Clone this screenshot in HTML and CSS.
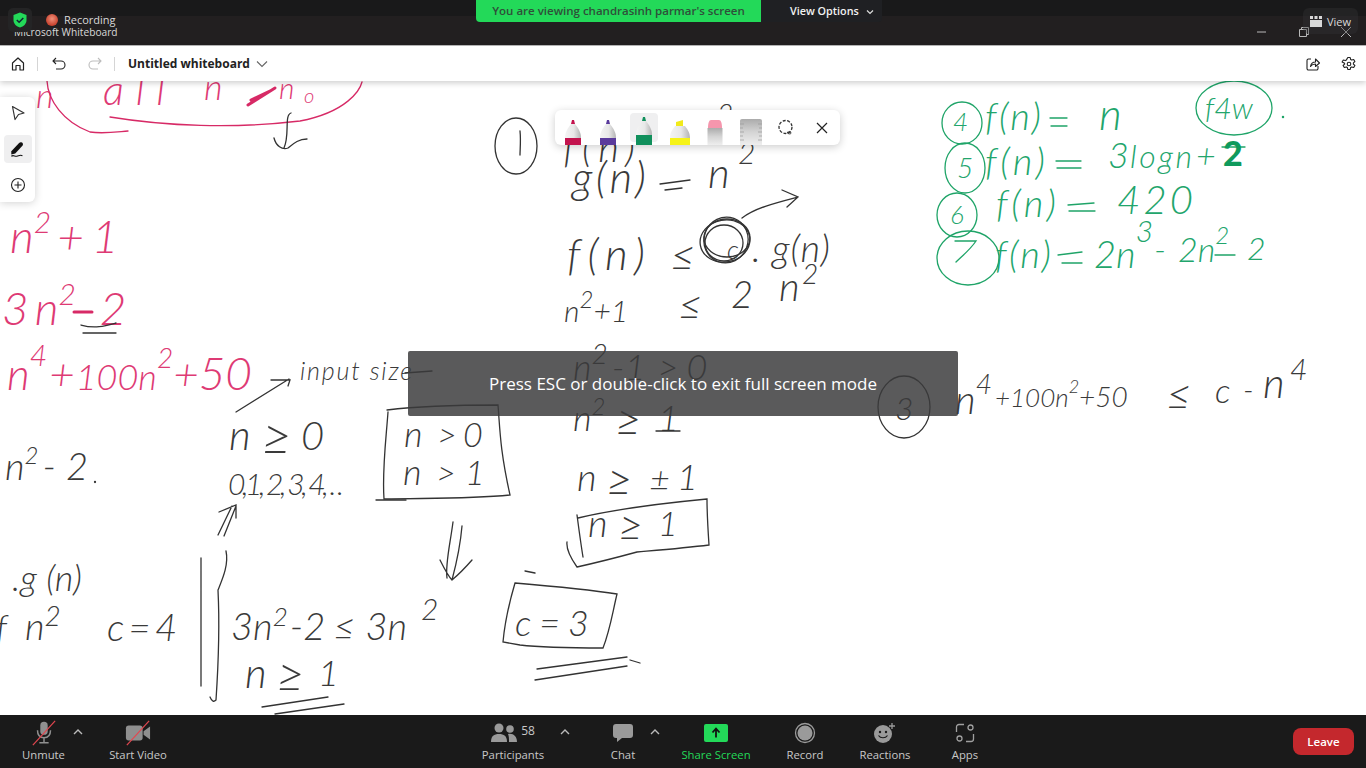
FILE: index.html
```html
<!DOCTYPE html>
<html lang="en">
<head>
    <meta charset="UTF-8">
    <meta name="viewport" content="width=device-width, initial-scale=1.0">
    <title>Microsoft Whiteboard</title>
    <link rel="stylesheet" href="styles.css">
</head>
<body>
<div class="screen">
    <div class="meeting-strip"></div>

    <div class="title-bar">
        <span class="app-name">Microsoft Whiteboard</span>
        <div class="window-controls">
            <svg width="12" height="12" viewBox="0 0 12 12"><path d="M1 6h9" stroke="#b9b9b9" fill="none"/></svg>
            <svg width="12" height="12" viewBox="0 0 12 12"><path d="M1.500 3.500h7v7h-7zM3.500 3.500v-2h7v7h-2" stroke="#b9b9b9" fill="none"/></svg>
            <svg width="12" height="12" viewBox="0 0 12 12"><path d="M1 1l10 10M11 1L1 11" stroke="#b9b9b9" fill="none"/></svg>
        </div>
    </div>

    <div class="wb-toolbar">
        <svg class="wb-icon" viewBox="0 0 16 16"><path d="M2.500 7L8 2l5.500 5v7h-3.500v-4.500h-4V14H2.500z" fill="none" stroke="#222" stroke-width="1.200" stroke-linejoin="round"/></svg>
        <span class="wb-divider"></span>
        <svg class="wb-icon undo" viewBox="0 0 16 16"><path d="M5 2L2 5l3 3M2.500 5H10a3.500 3.500 0 0 1 0 8H5" fill="none" stroke="#222" stroke-width="1.100"/></svg>
        <svg class="wb-icon redo" viewBox="0 0 16 16"><path d="M11 2l3 3-3 3M13.500 5H6a3.500 3.500 0 0 0 0 8h5" fill="none" stroke="#bdbdbd" stroke-width="1.100"/></svg>
        <span class="wb-divider"></span>
        <span class="wb-title">Untitled whiteboard</span>
        <svg class="wb-chevron" width="12" height="12" viewBox="0 0 12 12"><path d="M1 3.500l5 5 5-5" fill="none" stroke="#666" stroke-width="1.100"/></svg>
        <svg class="wb-icon share" viewBox="0 0 16 16"><path d="M6 3H3.500A1.500 1.500 0 0 0 2 4.500v8A1.500 1.500 0 0 0 3.500 14h8a1.500 1.500 0 0 0 1.500-1.500V10M5.500 10.500C6 7.500 8 6 10.500 6V3l4 4-4 3.500V8C8.500 8 6.500 9 5.500 10.500z" fill="none" stroke="#222" stroke-width="1.100" stroke-linejoin="round"/></svg>
        <svg class="wb-icon gear" viewBox="0 0 16 16"><path d="M6.800 1.500h2.400l.4 1.900 1.200.7 1.900-.6 1.200 2-1.500 1.300v1.400l1.500 1.300-1.200 2-1.900-.6-1.200.7-.4 1.900H6.800l-.4-1.900-1.200-.7-1.900.6-1.200-2 1.500-1.300V7.300L1.100 6l1.200-2 1.900.6 1.200-.7z" fill="none" stroke="#222" stroke-width="1.100" stroke-linejoin="round"/><circle cx="8" cy="8" r="1.800" fill="none" stroke="#222" stroke-width="1.100"/></svg>
    </div>

    <div class="board">
        <svg class="ink" viewBox="0 81 1366 634" width="1366" height="634">
            <!-- pink -->
            <g class="pink">
                <text x="36" y="108" font-size="34">n</text>
                <text x="103" y="105" font-size="42" textLength="62">all</text>
                <text x="204" y="100" font-size="36">n</text>
                <text x="279" y="99" font-size="30">n</text>
                <text x="304" y="103" font-size="20">o</text>
                <text x="10" y="253" font-size="46">n<tspan dy="-20" font-size="30">2</tspan><tspan dy="20" dx="6">+</tspan><tspan dx="8">1</tspan></text>
                <text x="2" y="325" font-size="46">3<tspan dx="6">n</tspan><tspan dy="-20" font-size="30">2</tspan><tspan dy="20" dx="24">2</tspan></text>
                <text x="7" y="390" font-size="44">n<tspan dy="-24" font-size="30">4</tspan><tspan dy="24" dx="2">+</tspan><tspan dx="1" font-size="36">100n</tspan><tspan dy="-22" font-size="28">2</tspan><tspan dy="22">+</tspan><tspan font-size="46">50</tspan></text>
                <path d="M47 81C48 100 63 122 90 132C103 134 116 132 128 131"/>
                <path d="M110 117C165 126 233 129 300 121C347 112 360 90 362 82"/>
                <path class="heavy" d="M248 105L275 88M251 100L272 90"/>
                <path class="heavy" d="M74 312H92"/>
            </g>
            <!-- black -->
            <g class="dark">
                <path d="M291 113C284 115 290 135 284 148M274 138C276 146 282 150 288 148C293 144 298 139 307 139"/>
                <path d="M81 325C95 329 105 326 116 323M83 333H116"/>
                <text x="5" y="480" font-size="38">n<tspan dy="-16" font-size="24">2</tspan><tspan dy="16" dx="4">-</tspan><tspan dx="10">2</tspan></text>
                <circle cx="95" cy="482" r="0.500"/>
                <text x="300" y="380" font-size="25" textLength="112">input size</text>
                <path d="M236 412L289 379M271 380H290L288 386"/>
                <path d="M405 373L432 371"/>
                <text x="229" y="450" font-size="42">n</text>
                <text x="261" y="455" font-size="54">≥</text>
                <text x="301" y="450" font-size="40">0</text>
                <text x="228" y="495" font-size="30" textLength="116">0,1, 2, 3, 4, . .</text>
                <path d="M376 500H406"/>
                <path d="M387 410C420 406 460 405 498 405C500 430 500 450 510 495C470 499 430 498 384 499C382 470 386 440 388 412"/>
                <text x="404" y="447" font-size="36">n</text>
                <text x="437" y="447" font-size="34">&gt;</text>
                <text x="463" y="447" font-size="34">0</text>
                <text x="403" y="485" font-size="36">n</text>
                <text x="436" y="485" font-size="34">&gt;</text>
                <text x="465" y="485" font-size="34">1</text>
                <path d="M218 535L232 506M224 536L236 506M219 512L236 505L236 518"/>
                <text x="12" y="591" font-size="36" textLength="70">.g (n)</text>
                <text x="-4" y="640" font-size="36">f</text>
                <text x="25" y="640" font-size="38">n<tspan dy="-14" font-size="28">2</tspan></text>
                <text x="107" y="641" font-size="38" textLength="70">c=4</text>
                <path d="M201 558V686M226 551C229 565 222 580 218 590C220 630 218 670 216 700C214 702 212 702 210 697"/>
                <text x="231" y="640" font-size="38">3n<tspan dy="-14" font-size="26">2</tspan><tspan dy="14" dx="2">-2</tspan><tspan dx="8">≤</tspan><tspan dx="10">3n</tspan><tspan dy="-20" font-size="30" dx="14">2</tspan></text>
                <text x="245" y="688" font-size="42">n</text>
                <text x="276" y="692" font-size="50">≥</text>
                <text x="318" y="686" font-size="36">1</text>
                <path d="M262 707L328 697M275 714L344 704"/>
                <path d="M453 522C450 545 445 565 447 578M462 526C460 550 456 565 452 580M440 560C445 570 450 578 452 580C458 575 465 568 472 560"/>

                <ellipse cx="516" cy="146" rx="21" ry="28"/>
                <path d="M520 131C521 140 520 150 520 155"/>
                <text x="563" y="162" font-size="40" textLength="72">f(n)</text>
                <text x="717" y="124" font-size="28">2</text>
                <text x="572" y="193" font-size="44" textLength="74">g(n)</text>
                <path d="M660 184L690 180M665 190L682 188"/>
                <text x="708" y="188" font-size="42">n</text>
                <text x="738" y="164" font-size="30">2</text>

                <text x="567" y="270" font-size="44" textLength="78">f(n)</text>
                <text x="670" y="271" font-size="44">≤</text>
                <ellipse cx="725" cy="241" rx="25" ry="21" transform="rotate(-10 725 241)"/>
                <ellipse cx="726" cy="240" rx="22" ry="23" transform="rotate(20 726 240)"/>
                <ellipse cx="724" cy="243" rx="19" ry="18"/>
                <ellipse cx="727" cy="238" rx="23" ry="19"/>
                <text x="727" y="259" font-size="26">c</text>
                <text x="752" y="262" font-size="38" textLength="78">. g(n)</text>
                <path d="M742 218C755 208 775 203 798 197M782 190L798 197L787 207"/>
                <text x="564" y="322" font-size="30">n<tspan dy="-14" font-size="24">2</tspan><tspan dy="14">+1</tspan></text>
                <text x="678" y="320" font-size="42">≤</text>
                <text x="731" y="308" font-size="38">2</text>
                <text x="779" y="301" font-size="40">n</text>
                <text x="802" y="284" font-size="28">2</text>

                <text x="573" y="380" font-size="36">n<tspan dy="-16" font-size="28">2</tspan><tspan dy="16" dx="4">-1</tspan><tspan dx="12">&gt;</tspan><tspan dx="8">0</tspan></text>
                <text x="573" y="431" font-size="36">n<tspan dy="-16" font-size="24">2</tspan></text>
                <text x="615" y="436" font-size="46">≥</text>
                <text x="658" y="431" font-size="36">1</text>
                <path d="M656 431H680"/>
                <text x="577" y="491" font-size="38">n</text>
                <text x="606" y="496" font-size="46">≥</text>
                <text x="650" y="491" font-size="34">±</text>
                <text x="677" y="490" font-size="36">1</text>

                <path d="M578 518C620 508 665 503 707 499C707 515 708 530 709 545C685 548 660 550 637 552C615 558 595 563 577 567C572 560 566 550 567 542M577 515C579 530 581 545 583 557"/>
                <text x="588" y="537" font-size="38">n</text>
                <text x="618" y="541" font-size="44">≥</text>
                <text x="658" y="536" font-size="34">1</text>
                <path d="M525 571L535 573"/>
                <path d="M515 583C550 586 585 589 617 594C612 615 610 630 603 648C575 648 545 648 520 645L503 642C505 620 510 600 515 583"/>
                <text x="515" y="636" font-size="36" textLength="74">c=3</text>
                <path d="M537 669L627 657M535 680L627 666M630 660L640 663"/>

                <ellipse cx="904" cy="407" rx="26" ry="31"/>
                <text x="895" y="420" font-size="32">3</text>
                <text x="955" y="414" font-size="40">n<tspan dy="-20" font-size="28">4</tspan><tspan dy="13" dx="3" font-size="26">+100n</tspan><tspan dy="-14" font-size="18">2</tspan><tspan dy="14" font-size="28">+50</tspan></text>
                <text x="1166" y="410" font-size="44">≤</text>
                <text x="1215" y="403" font-size="34">c</text>
                <text x="1243" y="400" font-size="30">-</text>
                <text x="1263" y="398" font-size="42">n</text>
                <text x="1290" y="380" font-size="30">4</text>
            </g>
            <!-- green -->
            <g class="green">
                <ellipse cx="962" cy="123" rx="20" ry="21"/>
                <text x="953" y="131" font-size="26">4</text>
                <text x="985" y="130" font-size="38" textLength="56">f(n)</text>
                <path d="M1050 118H1067M1051 126H1067"/>
                <text x="1099" y="130" font-size="44">n</text>
                <ellipse cx="1234" cy="108" rx="38" ry="27"/>
                <text x="1205" y="119" font-size="30">f4w</text>
                <circle cx="1283" cy="117" r="0.600"/>

                <ellipse cx="965" cy="168" rx="20" ry="25"/>
                <text x="957" y="178" font-size="28">5</text>
                <text x="985" y="175" font-size="38" textLength="60">f(n)</text>
                <path d="M1056 161H1081M1057 168H1081"/>
                <text x="1108" y="168" font-size="36">3</text>
                <text x="1130" y="168" font-size="32" textLength="62">logn</text>
                <text x="1196" y="168" font-size="34">+</text>
                <path d="M1222 147H1245"/>
                <text class="bold-ink" x="1223" y="166" font-size="34">2</text>

                <ellipse cx="957" cy="215" rx="20" ry="22"/>
                <text x="950" y="224" font-size="26">6</text>
                <text x="996" y="217" font-size="38" textLength="60">f(n)</text>
                <path d="M1068 205L1094 203M1069 211H1095"/>
                <text x="1117" y="214" font-size="40" textLength="76">420</text>

                <ellipse cx="968" cy="258" rx="31" ry="27"/>
                <path d="M955 241H976C970 250 962 256 956 262"/>
                <text x="995" y="268" font-size="38" textLength="56">f(n)</text>
                <path d="M1058 255L1082 252M1062 263H1082"/>
                <text x="1094" y="268" font-size="38">2n<tspan dy="-26" font-size="30">3</tspan></text>
                <text x="1154" y="262" font-size="34">-</text>
                <text x="1178" y="262" font-size="34">2n<tspan dy="-18" font-size="24">2</tspan></text>
                <path d="M1215 255H1235"/>
                <text x="1247" y="260" font-size="32">2</text>
            </g>
        </svg>

        <div class="tool-panel">
            <button class="panel-btn">
                <svg width="16" height="16" viewBox="0 0 16 16"><path d="M2.500 1.500L14 8l-5.500 1.500L5 14.500z" fill="none" stroke="#333" stroke-width="1.200" stroke-linejoin="round"/></svg>
            </button>
            <button class="panel-btn active">
                <svg width="20" height="20" viewBox="0 0 18 18"><path d="M3 11L10 3.500c2-1.500 4.500 .5 3 2.500L6.500 13l-3.500 1z" fill="#111"/><path d="M3 15.500c2-1.500 3 .5 5 0s3-1.500 5-.5" fill="none" stroke="#111"/></svg>
            </button>
            <button class="panel-btn">
                <svg width="16" height="16" viewBox="0 0 16 16"><circle cx="8" cy="8" r="6.500" fill="none" stroke="#222" stroke-width="1.100"/><path d="M8 4.500v7M4.500 8h7" stroke="#222" stroke-width="1.100"/></svg>
            </button>
        </div>

        <div class="pen-tray">
            <div class="pen-slot">
                <svg width="20" height="34" viewBox="0 0 20 34"><path d="M8 13l1-4h2l1 4z" fill="#c3134e"/><path d="M8 13h4c3 4 6 8 6 14H2c0-6 3-10 6-14z" fill="url(#cone)"/><path d="M2 27h16v7H2z" fill="#c3134e"/></svg>
            </div>
            <div class="pen-slot">
                <svg width="20" height="34" viewBox="0 0 20 34"><path d="M8 13l1-4h2l1 4z" fill="#5a3b9c"/><path d="M8 13h4c3 4 6 8 6 14H2c0-6 3-10 6-14z" fill="url(#cone)"/><path d="M2 27h16v7H2z" fill="#5a3b9c"/></svg>
            </div>
            <div class="pen-slot active">
                <svg width="20" height="34" viewBox="0 0 20 34"><path d="M8 10l1-4h2l1 4z" fill="#11905c"/><path d="M8 10h4c3 4 6 8 6 14H2c0-6 3-10 6-14z" fill="url(#cone)"/><path d="M2 24h16v10H2z" fill="#11905c"/></svg>
            </div>
            <div class="pen-slot">
                <svg width="24" height="34" viewBox="0 0 24 34"><path d="M8 15v-4l7-2v6z" fill="#f1ea1a"/><path d="M7 15h10c2 3 5 6 5 12H2c0-6 3-9 5-12z" fill="url(#cone)"/><path d="M2 27h20v7H2z" fill="#f6f318"/></svg>
            </div>
            <div class="pen-slot">
                <svg width="18" height="34" viewBox="0 0 18 34"><path d="M2 17C2 12 3 9 5 9h8c2 0 3 3 3 8z" fill="#f596ad"/><path d="M1.500 17h15v17h-15z" fill="url(#rubber)"/></svg>
            </div>
            <div class="pen-slot">
                <svg width="24" height="34" viewBox="0 0 24 34"><path d="M1 10c0-2 2-2 3-2h16c1 0 3 0 3 2v24H1z" fill="url(#rubber)"/><path d="M1 13h4M1 17h3M1 21h4M1 25h3M1 29h4M23 13h-4M23 17h-3M23 21h-4M23 25h-3M23 29h-4" stroke="#9a9a9a" stroke-width=".7"/></svg>
            </div>
            <div class="pen-slot">
                <svg width="18" height="18" viewBox="0 0 18 18"><circle cx="8.500" cy="8" r="6.500" fill="none" stroke="#333" stroke-width="1.300" stroke-dasharray="3 1.500"/><path d="M10 13.500c2-1 4-1 4 .5s-3 1-4-.5z" fill="none" stroke="#333"/></svg>
            </div>
            <div class="pen-slot">
                <svg width="14" height="14" viewBox="0 0 14 14"><path d="M2 2l10 10M12 2L2 12" stroke="#222" stroke-width="1.200"/></svg>
            </div>
            <svg class="pen-defs" width="0" height="0">
                <defs>
                    <linearGradient id="cone" x1="0" x2="1" y1="0" y2="0"><stop offset="0" stop-color="#f4f4f4"/><stop offset=".55" stop-color="#e8e8e8"/><stop offset="1" stop-color="#b4b4b4"/></linearGradient>
                    <linearGradient id="rubber" x1="0" x2="0" y1="0" y2="1"><stop offset="0" stop-color="#ababab"/><stop offset=".5" stop-color="#d4d4d4"/><stop offset="1" stop-color="#eee"/></linearGradient>
                </defs>
            </svg>
        </div>

        <div class="fullscreen-msg">Press ESC or double-click to exit full screen mode</div>
    </div>

    <div class="zoom-toolbar">
        <div class="tool tool-unmute">
            <svg class="tool-icon" width="30" height="28" viewBox="0 0 30 28"><rect x="11" y="2" width="8" height="14" rx="4" fill="#8f8f8f"/><path d="M8 11c0 6 3 8 7 8s7-2 7-8M15 19v5M10 24.500h10" fill="none" stroke="#8f8f8f" stroke-width="1.600"/><path d="M3 27L27 1" stroke="#e2464f" stroke-width="1.300"/></svg>
            <span class="tool-label">Unmute</span>
        </div>
        <svg class="caret" width="12" height="8" viewBox="0 0 12 8"><path d="M2 6l4-4 4 4" fill="none" stroke="#bbb" stroke-width="1.400"/></svg>
        <div class="tool tool-video">
            <svg class="tool-icon" width="30" height="28" viewBox="0 0 30 28"><rect x="2" y="6" width="18" height="16" rx="3" fill="#8f8f8f"/><path d="M21 12l7-5v14l-7-5z" fill="#8f8f8f"/><path d="M3 27L27 1" stroke="#e2464f" stroke-width="1.300"/></svg>
            <span class="tool-label">Start Video</span>
        </div>

        <div class="tool tool-participants">
            <div class="tool-icon">
                <svg width="26" height="20" viewBox="0 0 26 20"><circle cx="8" cy="5" r="4.500" fill="#9a9a9a"/><circle cx="19" cy="6" r="3.800" fill="#9a9a9a"/><path d="M0 19c0-6 3-8 8-8s8 2 8 8z" fill="#9a9a9a"/><path d="M17 11c5-1 9 2 9 8h-8c0-3 0-6-1-8z" fill="#9a9a9a"/></svg>
                <span class="count">58</span>
            </div>
            <span class="tool-label">Participants</span>
        </div>
        <svg class="caret caret-people" width="12" height="8" viewBox="0 0 12 8"><path d="M2 6l4-4 4 4" fill="none" stroke="#bbb" stroke-width="1.400"/></svg>
        <div class="tool tool-chat">
            <svg class="tool-icon" width="22" height="20" viewBox="0 0 22 20"><path d="M4 1h14a3 3 0 0 1 3 3v8a3 3 0 0 1-3 3H10l-5 4v-4H4a3 3 0 0 1-3-3V4a3 3 0 0 1 3-3z" fill="#9a9a9a"/></svg>
            <span class="tool-label">Chat</span>
        </div>
        <svg class="caret caret-chat" width="12" height="8" viewBox="0 0 12 8"><path d="M2 6l4-4 4 4" fill="none" stroke="#bbb" stroke-width="1.400"/></svg>
        <div class="tool tool-share">
            <svg class="tool-icon" width="24" height="18" viewBox="0 0 24 18"><rect width="24" height="18" rx="2" fill="#23d959"/><path d="M12 13.500V5M8.500 8.500L12 4.500l3.500 4" fill="none" stroke="#111" stroke-width="1.800"/></svg>
            <span class="tool-label share-label">Share Screen</span>
        </div>
        <div class="tool tool-record">
            <svg class="tool-icon" width="22" height="22" viewBox="0 0 22 22"><circle cx="11" cy="11" r="9.500" fill="none" stroke="#9a9a9a" stroke-width="1.300"/><circle cx="11" cy="11" r="7.500" fill="#9a9a9a"/></svg>
            <span class="tool-label">Record</span>
        </div>
        <div class="tool tool-reactions">
            <svg class="tool-icon" width="24" height="22" viewBox="0 0 24 22"><circle cx="10" cy="12" r="9" fill="#9a9a9a"/><circle cx="7" cy="10" r="1.200" fill="#1a1a1a"/><circle cx="13" cy="10" r="1.200" fill="#1a1a1a"/><path d="M5.500 13.500c2 3 7 3 9 0" fill="none" stroke="#1a1a1a" stroke-width="1.200"/><path d="M19 1v6M16 4h6" stroke="#9a9a9a" stroke-width="1.300"/></svg>
            <span class="tool-label">Reactions</span>
        </div>
        <div class="tool tool-apps">
            <svg class="tool-icon" width="20" height="20" viewBox="0 0 20 20"><path d="M1.500 9V4a2.500 2.500 0 0 1 2.500-2.500h5M18.500 11v5a2.500 2.500 0 0 1-2.500 2.500h-5" fill="none" stroke="#a0a0a0" stroke-width="1.300"/><circle cx="15.500" cy="4.500" r="2.500" fill="none" stroke="#a0a0a0" stroke-width="1.300"/><circle cx="4.500" cy="15.500" r="2.500" fill="none" stroke="#a0a0a0" stroke-width="1.300"/></svg>
            <span class="tool-label">Apps</span>
        </div>
        <button class="leave-btn">Leave</button>
    </div>

    <!-- meeting overlays -->
    <div class="shield-box">
        <svg width="14" height="16" viewBox="0 0 14 16"><path d="M7 .5L13.500 3v5c0 4-3 6.500-6.500 7.500C3.500 14.500.5 12 .5 8V3z" fill="#23d959"/><path d="M3.800 8l2.300 2.300 4.200-4.300" fill="none" stroke="#123" stroke-width="1.500"/></svg>
    </div>
    <div class="recording">
        <span class="rec-dot"></span>
        <span>Recording</span>
    </div>
    <div class="viewing-banner">
        <span class="viewing-text">You are viewing chandrasinh parmar's screen</span>
        <span class="view-options">View Options
            <svg width="8" height="6" viewBox="0 0 8 6"><path d="M1 1.500l3 3 3-3" fill="none" stroke="#ddd" stroke-width="1.200"/></svg>
        </span>
    </div>
    <div class="view-btn">
        <svg width="12" height="11" viewBox="0 0 12 11"><path d="M0 0h3v3H0zM4.500 0h3v3h-3zM9 0h3v3H9zM0 4h12v7H0z" fill="#d8d8d8"/></svg>
        <span>View</span>
    </div>
</div>
</body>
</html>
```

FILE: styles.css
```css
* {
  box-sizing: border-box;
}

body {
  margin: 0;
  font-family: "Open Sans", "Noto Sans", sans-serif;
  background-color: #fff;
}

.screen {
  position: relative;
  display: flex;
  flex-direction: column;
  width: 1366px;
  height: 768px;
  overflow: hidden;
}

.meeting-strip {
  height: 16px;
  background-color: #19191a;
}

.title-bar {
  display: flex;
  align-items: center;
  justify-content: space-between;
  height: 30px;
  padding: 2px 14px 0;
  background-color: #221f20;
  border-bottom: 1px solid #bbb;
}

.app-name {
  font-size: 10.200px;
  color: #d9d9d9;
}

.window-controls {
  display: flex;
  gap: 30px;
}

/* whiteboard toolbar */
.wb-toolbar {
  position: relative;
  z-index: 2;
  display: flex;
  align-items: center;
  height: 35px;
  padding: 0 9px 0 10px;
  background-color: #fff;
  box-shadow: 0 2px 6px rgba(0, 0, 0, 0.2);
}

.wb-icon {
  width: 16px;
  height: 16px;
}

.wb-divider {
  width: 1px;
  height: 14px;
  margin: 0 13px 0 11px;
  background-color: #d5d5d5;
}

.redo {
  margin-left: 20px;
}

.wb-title {
  font-size: 12px;
  font-weight: 700;
  color: #222;
}

.wb-chevron {
  margin-left: 6px;
}

.share {
  margin-left: auto;
  margin-right: 20px;
}

/* the board */
.board {
  position: relative;
  flex: 1;
  background-color: #fff;
}

.ink {
  display: block;
}

.ink text {
  font-family: "Lato", sans-serif;
  font-weight: 300;
  font-style: italic;
}

.ink path,
.ink ellipse,
.ink circle {
  fill: none;
  stroke-width: 1.300;
  stroke-linecap: round;
}

.pink text {
  fill: #de3a74;
}

.pink path {
  stroke: #d72a66;
}

.pink .heavy {
  stroke-width: 3;
}

.dark text {
  fill: #3a3a3a;
}

.dark path,
.dark ellipse,
.dark circle {
  stroke: #333;
}

.green text {
  fill: #22a56c;
}

.green path,
.green ellipse,
.green circle {
  stroke: #1fa468;
}

.green .bold-ink {
  font-weight: 900;
  font-style: normal;
  fill: #0f9a5c;
}

.tool-panel {
  position: absolute;
  left: 0;
  top: 16px;
  display: flex;
  flex-direction: column;
  gap: 8px;
  width: 35px;
  padding: 2px 3px 3px 4px;
  background-color: #fff;
  border-radius: 0 6px 6px 0;
  box-shadow: 0 1px 8px rgba(0, 0, 0, 0.18);
}

.panel-btn {
  display: flex;
  align-items: center;
  justify-content: center;
  width: 28px;
  height: 28px;
  padding: 0;
  background: none;
  border: none;
  border-radius: 4px;
}

.panel-btn.active {
  background-color: #efeff0;
}

.pen-tray {
  position: absolute;
  left: 555px;
  top: 29px;
  display: flex;
  align-items: flex-end;
  width: 285px;
  height: 35px;
  background-color: #fff;
  border-radius: 6px;
  box-shadow: 0 2px 8px rgba(0, 0, 0, 0.2);
  overflow: hidden;
}

.pen-slot {
  display: flex;
  align-items: flex-end;
  justify-content: center;
  width: 35.600px;
  height: 35px;
}

.pen-slot:nth-child(n+7) {
  align-items: center;
}

.pen-slot.active {
  position: relative;
  flex: none;
  width: 28px;
  margin: 0 3.800px;
}

.pen-slot.active::before {
  content: "";
  position: absolute;
  top: 3px;
  left: 0;
  width: 28px;
  height: 29px;
  background-color: #efeff0;
  border-radius: 4px;
}

.pen-slot.active svg {
  position: relative;
}

.pen-defs {
  position: absolute;
}

.fullscreen-msg {
  position: absolute;
  left: 408px;
  top: 270px;
  display: flex;
  align-items: center;
  justify-content: center;
  width: 550px;
  height: 65px;
  font-size: 17px;
  color: #fff;
  background-color: rgba(58, 58, 60, 0.84);
  border-radius: 2px;
}

/* zoom bottom bar */
.zoom-toolbar {
  display: flex;
  align-items: flex-start;
  height: 53px;
  padding-left: 15px;
  background-color: #1a1a1a;
}

.tool {
  display: flex;
  flex-direction: column;
  align-items: center;
  height: 53px;
  padding-top: 5px;
}

.tool-icon {
  display: flex;
  align-items: center;
  height: 26px;
}

.tool-label {
  margin-top: 1px;
  font-size: 11.300px;
  line-height: 16px;
  color: #c8c8c8;
  white-space: nowrap;
}

.share-label {
  color: #23d959;
}

.count {
  margin-left: 4px;
  font-size: 12px;
  color: #c8c8c8;
  transform: translateY(-3px);
}

.caret {
  flex: none;
  margin-top: 13px;
}

.tool-unmute {
  width: 57px;
}

.tool-video {
  width: 108px;
}

.tool-participants {
  width: 62px;
  margin-left: 290px;
}

.caret-people {
  margin-left: 15px;
}

.tool-chat {
  width: 40px;
  margin-left: 32px;
}

.caret-chat {
  margin-left: 6px;
}

.tool-share {
  width: 74px;
  margin-left: 18px;
}

.tool-record {
  width: 50px;
  margin-left: 27px;
}

.tool-reactions {
  width: 56px;
  margin-left: 27px;
}

.tool-apps {
  width: 40px;
  margin-left: 32px;
}

.leave-btn {
  width: 61px;
  height: 27px;
  margin: 13px 12px 0 auto;
  font-family: inherit;
  font-size: 11.500px;
  font-weight: 600;
  color: #fff;
  background-color: #c4282d;
  border: none;
  border-radius: 8px;
}

/* meeting overlays */
.shield-box {
  position: absolute;
  left: 8px;
  top: 8px;
  display: flex;
  align-items: center;
  justify-content: center;
  width: 24px;
  height: 24px;
  background-color: #242425;
  border-radius: 5px;
}

.recording {
  position: absolute;
  left: 46px;
  top: 12px;
  display: flex;
  align-items: center;
  gap: 6px;
  font-size: 11px;
  line-height: 16px;
  color: #d9d9d9;
}

.rec-dot {
  width: 12px;
  height: 12px;
  background: radial-gradient(circle at 50% 40%, #f0907a, #c8432f 70%);
  border-radius: 50%;
}

.viewing-banner {
  position: absolute;
  left: 476px;
  top: 0;
  display: flex;
  height: 22px;
  font-size: 11.500px;
  font-weight: 600;
  line-height: 22px;
  background-color: #1f2023;
  border-radius: 0 0 4px 4px;
  overflow: hidden;
}

.viewing-text {
  width: 285px;
  text-align: center;
  color: #2f4f3a;
  background-color: #23d959;
}

.view-options {
  width: 121px;
  padding-left: 29px;
  font-size: 10.800px;
  color: #f2f2f2;
}

.view-options svg {
  margin-left: 4px;
}

.view-btn {
  position: absolute;
  left: 1303px;
  top: 8px;
  display: flex;
  align-items: center;
  justify-content: center;
  gap: 5px;
  width: 55px;
  height: 26px;
  font-size: 11px;
  color: #d9d9d9;
  background-color: rgba(50, 50, 52, 0.4);
  border-radius: 6px;
}
```
